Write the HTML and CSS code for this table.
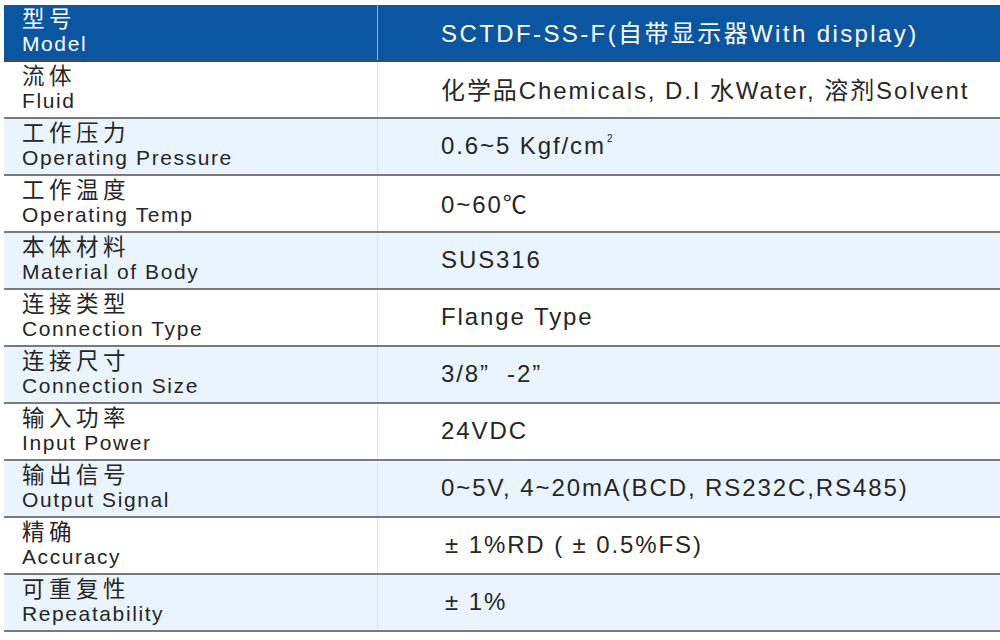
FILE: index.html
```html
<!DOCTYPE html>
<html lang="zh">
<head>
<meta charset="utf-8">
<link rel="stylesheet" href="styles.css">
</head>
<body>
<div class="spec">
  <div class="row head">
    <div class="label"><span class="zh">型号</span><span class="en">Model</span></div>
    <div class="value">SCTDF-SS-F(自带显示器With display)</div>
  </div>
  <div class="row">
    <div class="label"><span class="zh">流体</span><span class="en">Fluid</span></div>
    <div class="value">化学品Chemicals, D.I 水Water, 溶剂Solvent</div>
  </div>
  <div class="row alt">
    <div class="label"><span class="zh">工作压力</span><span class="en">Operating Pressure</span></div>
    <div class="value">0.6~5 Kgf/cm<sup class="sq">2</sup></div>
  </div>
  <div class="row">
    <div class="label"><span class="zh">工作温度</span><span class="en">Operating Temp</span></div>
    <div class="value">0~60℃</div>
  </div>
  <div class="row alt">
    <div class="label"><span class="zh">本体材料</span><span class="en">Material of Body</span></div>
    <div class="value">SUS316</div>
  </div>
  <div class="row">
    <div class="label"><span class="zh">连接类型</span><span class="en">Connection Type</span></div>
    <div class="value">Flange Type</div>
  </div>
  <div class="row alt">
    <div class="label"><span class="zh">连接尺寸</span><span class="en">Connection Size</span></div>
    <div class="value">3/8”&nbsp;&nbsp;-2”</div>
  </div>
  <div class="row">
    <div class="label"><span class="zh">输入功率</span><span class="en">Input Power</span></div>
    <div class="value">24VDC</div>
  </div>
  <div class="row alt">
    <div class="label"><span class="zh">输出信号</span><span class="en">Output Signal</span></div>
    <div class="value">0~5V, 4~20mA(BCD, RS232C,RS485)</div>
  </div>
  <div class="row">
    <div class="label"><span class="zh">精确</span><span class="en">Accuracy</span></div>
    <div class="value pm">± 1%RD ( ± 0.5%FS)</div>
  </div>
  <div class="row alt">
    <div class="label"><span class="zh">可重复性</span><span class="en">Repeatability</span></div>
    <div class="value pm">± 1%</div>
  </div>
</div>
</body>
</html>
```

FILE: styles.css
```css
html, body {
  margin: 0;
  padding: 0;
  background: #ffffff;
}
body {
  padding: 5px 0 0 4px;
  font-family: "Liberation Sans", Arial, "Noto Sans CJK SC", sans-serif;
  color: #262626;
}
.spec {
  width: 996px;
  display: flex;
  flex-direction: column;
}
.row {
  display: grid;
  grid-template-columns: 373px 1fr;
  height: 57px;
  box-sizing: border-box;
  border-bottom: 2px solid #7a7a7a;
  background: #ffffff;
}
.row.alt {
  background: #eaf4fc;
}
.row.head {
  background: #0b56a1;
  color: #ffffff;
  border-bottom: 2px solid #3a4a60;
}
.label {
  display: flex;
  flex-direction: column;
  justify-content: center;
  padding-left: 18px;
  padding-bottom: 2px;
}
.zh {
  font-family: "Liberation Sans", "Noto Sans CJK SC", sans-serif;
  font-size: 22.5px;
  line-height: 25px;
  letter-spacing: 4.5px;
}
.en {
  font-size: 21px;
  line-height: 24px;
  letter-spacing: 1.6px;
}
.value {
  display: flex;
  align-items: center;
  padding-left: 63px;
  font-size: 24px;
  letter-spacing: 1.9px;
  border-left: 1px solid #dde3ea;
  padding-bottom: 2px;
}
.head .value {
  border-left: 1px solid #8fb6e0;
  letter-spacing: 2.4px;
}
.value.pm {
  padding-left: 67px;
}
.sq {
  font-size: 10px;
  align-self: flex-start;
  margin-top: 14px;
  margin-left: 1px;
}
```
